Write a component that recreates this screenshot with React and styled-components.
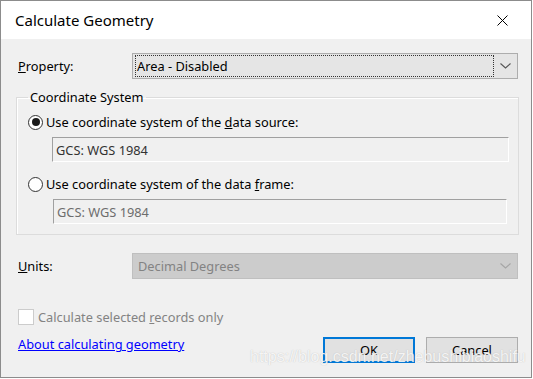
import React from "react";
import styled, { createGlobalStyle } from "styled-components";

const Global = createGlobalStyle`
  html, body { margin: 0; padding: 0; background: #ffffff; }
  * { box-sizing: border-box; }
`;

const Window = styled.div`
  position: relative;
  width: 532px;
  height: 378px;
  border: 1px solid #8c8c8c;
  background: #f0f0f0;
  display: flex;
  flex-direction: column;
  font-family: "Noto Sans", "Open Sans", sans-serif;
  font-size: 12.8px;
  color: #000;
  overflow: hidden;
`;

const TitleBar = styled.div`
  height: 38px;
  flex: none;
  background: #ffffff;
  display: flex;
  align-items: center;
  justify-content: space-between;
  padding: 0 23px 0 14px;
`;

const Title = styled.div`
  font-size: 15px;
  color: #000;
  padding-bottom: 1px;
`;

const Body = styled.div`
  flex: 1;
  display: flex;
  flex-direction: column;
  padding: 14px 12px 0 15px;
`;

const FieldRow = styled.div`
  display: flex;
  align-items: center;
  padding-left: 2px;
  margin-top: ${(p) => p.$top || 0}px;
`;

const Label = styled.div`
  width: 114px;
  flex: none;
`;

const Combo = styled.div`
  flex: 1;
  height: 26px;
  margin-right: 1px;
  display: flex;
  align-items: stretch;
  border: 1px solid ${(p) => (p.$disabled ? "#bfbfbf" : "#adadad")};
  background: ${(p) => (p.$disabled ? "#cccccc" : "#e5e5e5")};
  color: ${(p) => (p.$disabled ? "#838383" : "#000")};
`;

const ComboValue = styled.div`
  flex: 1;
  display: flex;
  align-items: center;
  margin: 1px 0 1px 2px;
  padding-left: ${(p) => (p.$focus ? 1 : 2)}px;
  border: 1px ${(p) => (p.$focus ? "dotted #333" : "solid transparent")};
`;

const Arrow = styled.div`
  width: 23px;
  flex: none;
  display: flex;
  align-items: center;
  justify-content: center;
`;

const Group = styled.fieldset`
  margin: 10px 0 0 0;
  padding: 8px 9px 10px 11px;
  border: 1px solid #dcdcdc;
  box-shadow: inset 1px 1px 0 #ffffff;
  display: flex;
  flex-direction: column;
  min-width: 0;
`;

const Legend = styled.legend`
  margin-left: 0;
  padding: 0 2px;
  line-height: 16px;
`;

const Choice = styled.label`
  display: flex;
  align-items: center;
  height: 18px;
  gap: 3px;
  margin-top: ${(p) => p.$top || 0}px;
`;

const Radio = styled.span`
  width: 15px;
  height: 15px;
  border-radius: 50%;
  border: 1px solid #333;
  background: #fff;
  display: flex;
  align-items: center;
  justify-content: center;
  flex: none;

  &::after {
    content: "";
    width: 8px;
    height: 8px;
    border-radius: 50%;
    background: ${(p) => (p.$checked ? "#1a1a1a" : "transparent")};
  }
`;

const TextBox = styled.div`
  height: 25px;
  margin: 6px ${(p) => (p.$dim ? 2 : 0)}px 0 ${(p) => (p.$dim ? 25 : 24)}px;
  display: flex;
  align-items: center;
  padding-left: 3px;
  border-top: 1px solid #a0a0a0;
  border-left: 1px solid #a0a0a0;
  border-right: 1px solid #ffffff;
  border-bottom: 1px solid #ffffff;
  color: ${(p) => (p.$dim ? "#6d6d6d" : "#333")};
`;

const Footer = styled.div`
  display: flex;
  justify-content: space-between;
  align-items: flex-start;
  margin-top: 30px;
`;

const FooterLeft = styled.div`
  display: flex;
  flex-direction: column;
  padding-left: 2px;
`;

const Check = styled.label`
  display: flex;
  align-items: center;
  gap: 4px;
  height: 16px;
  color: #838383;
`;

const CheckBox = styled.span`
  width: 16px;
  height: 16px;
  border: 1px solid #cccccc;
  background: #ffffff;
  flex: none;
`;

const HelpLink = styled.a`
  margin-top: 11px;
  line-height: 16px;
  color: #0000ff;
  text-decoration: underline;
`;

const Buttons = styled.div`
  display: flex;
  gap: 11px;
  margin: 28px 1px 0 0;
`;

const Button = styled.button`
  width: 92px;
  height: 26px;
  font: inherit;
  color: #000;
  background: #e1e1e1;
  border: ${(p) => (p.$primary ? "2px solid #0078d7" : "1px solid #adadad")};
  padding: 0;
`;

const Watermark = styled.div`
  position: absolute;
  left: 249px;
  top: 347px;
  font-family: "Liberation Sans", Arial, sans-serif;
  font-size: 16px;
  color: rgba(255, 255, 255, 0.85);
  text-shadow: 0 0 1px rgba(150, 150, 150, 0.6);
  white-space: nowrap;
  pointer-events: none;
`;

const Chevron = ({ color }) => (
  <svg width="11" height="6" viewBox="0 0 11 6">
    <path d="M0.5 0.5 L5.5 5 L10.5 0.5" fill="none" stroke={color} strokeWidth="1.1" />
  </svg>
);

const CloseIcon = () => (
  <svg width="11" height="11" viewBox="0 0 11 11">
    <path d="M0.5 0.5 L10.5 10.5 M10.5 0.5 L0.5 10.5" stroke="#000" strokeWidth="1" />
  </svg>
);

export default function App() {
  return (
    <>
      <Global />
      <Window>
        <TitleBar>
          <Title>Calculate Geometry</Title>
          <CloseIcon />
        </TitleBar>
        <Body>
          <FieldRow>
            <Label>
              <u>P</u>roperty:
            </Label>
            <Combo>
              <ComboValue $focus>Area - Disabled</ComboValue>
              <Arrow>
                <Chevron color="#555" />
              </Arrow>
            </Combo>
          </FieldRow>

          <Group>
            <Legend>Coordinate System</Legend>
            <Choice>
              <Radio $checked />
              <span>
                Use coordinate system of the <u>d</u>ata source:
              </span>
            </Choice>
            <TextBox>GCS: WGS 1984</TextBox>
            <Choice $top={13}>
              <Radio />
              <span>
                Use coordinate system of the data <u>f</u>rame:
              </span>
            </Choice>
            <TextBox $dim>GCS: WGS 1984</TextBox>
          </Group>

          <FieldRow $top={18}>
            <Label>
              <u>U</u>nits:
            </Label>
            <Combo $disabled>
              <ComboValue>Decimal Degrees</ComboValue>
              <Arrow>
                <Chevron color="#a5a5a5" />
              </Arrow>
            </Combo>
          </FieldRow>

          <Footer>
            <FooterLeft>
              <Check>
                <CheckBox />
                <span>
                  Calculate selected <u>r</u>ecords only
                </span>
              </Check>
              <HelpLink href="#">About calculating geometry</HelpLink>
            </FooterLeft>
            <Buttons>
              <Button $primary>OK</Button>
              <Button>Cancel</Button>
            </Buttons>
          </Footer>
        </Body>
        <Watermark>https://blog.csdn.net/zhebushibiaoshifu</Watermark>
      </Window>
    </>
  );
}
